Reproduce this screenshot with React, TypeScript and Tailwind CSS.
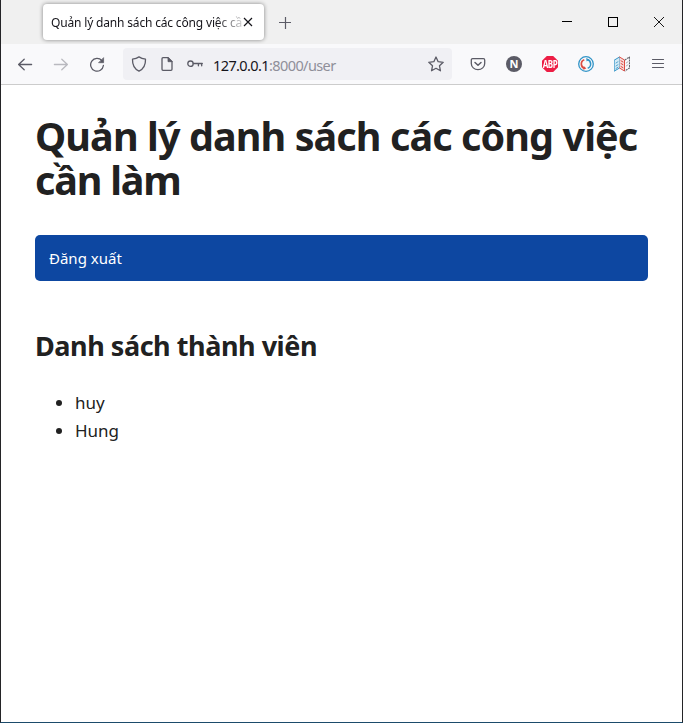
import type { ReactNode } from "react";

function Icon({ children, className = "" }: { children: ReactNode; className?: string }) {
  return (
    <svg
      viewBox="0 0 16 16"
      className={`h-4 w-4 shrink-0 ${className}`}
      fill="none"
      stroke="#5b5b66"
      strokeWidth="1.3"
      strokeLinecap="round"
      strokeLinejoin="round"
    >
      {children}
    </svg>
  );
}

function TitleBar() {
  return (
    <div className="flex h-11 shrink-0 items-start bg-[#f0f0f0]">
      <div className="mt-1 ml-[42px] flex h-9 w-[221px] shrink-0 items-center rounded bg-white pl-2 shadow-[0_0_4px_rgba(0,0,0,0.45)]">
        <div className="mt-0.5 w-[191px] overflow-hidden whitespace-nowrap text-[12px] leading-5 tracking-[-0.17px] text-[#15141a] [mask-image:linear-gradient(to_right,black_165px,transparent_197px)]">
          Quản lý danh sách các công việc cần làm
        </div>
        <svg viewBox="0 0 10 10" className="ml-px h-[10px] w-[10px] shrink-0" stroke="#15141a" strokeWidth="1.2">
          <path d="M1 1l8 8M9 1l-8 8" />
        </svg>
      </div>
      <svg viewBox="0 0 12 12" className="mt-[17px] ml-[15px] h-3 w-3 shrink-0" stroke="#5b5b66" strokeWidth="1.2">
        <path d="M6.5 0v12M0 5.5h12" />
      </svg>
      <div className="ml-auto flex h-11 items-center">
        <div className="flex w-[46px] justify-center">
          <svg viewBox="0 0 10 10" className="h-[10px] w-[10px]" stroke="#000" shapeRendering="crispEdges">
            <path d="M0 4.5h10" />
          </svg>
        </div>
        <div className="flex w-[46px] justify-center">
          <svg viewBox="0 0 10 10" className="h-[10px] w-[10px]" stroke="#000" fill="none" shapeRendering="crispEdges">
            <path d="M.5 .5h9v9h-9z" />
          </svg>
        </div>
        <div className="flex w-[46px] justify-center">
          <svg viewBox="0 0 10 10" className="h-[10px] w-[10px]" stroke="#000" strokeWidth="0.9">
            <path d="M0 0l10 10M10 0L0 10" />
          </svg>
        </div>
      </div>
    </div>
  );
}

function NavBar() {
  return (
    <div className="flex h-[41px] shrink-0 items-center border-b border-[#cccccc] bg-[#f9f9fb] pl-4">
      <Icon>
        <path d="M1.6 8.5h13M7.2 3.2L1.6 8.5l5.6 5.3" />
      </Icon>
      <Icon className="ml-5 opacity-40">
        <path d="M1.4 8.5h13M8.8 3.2l5.6 5.3-5.6 5.3" />
      </Icon>
      <Icon className="ml-5">
        <path d="M12.9 4.6A6.4 6.4 0 1 0 14.4 9.5" />
        <path d="M14.6 2v4.7H9.9z" fill="#5b5b66" strokeWidth="0.7" />
      </Icon>
      <div className="ml-[18px] flex h-8 w-[329px] items-center rounded bg-[#f0f0f4] px-2">
        <Icon>
          <path d="M8 .9c2 1.4 4 2 6.5 2.3.2 5.6-1.7 9.6-6.5 11.9C3.2 12.8 1.3 8.8 1.5 3.2 4 2.9 6 2.3 8 .9z" />
        </Icon>
        <Icon className="ml-3">
          <path d="M4 1.7h5l4 4v7.6a1 1 0 0 1-1 1H4a1 1 0 0 1-1-1V2.7a1 1 0 0 1 1-1z" />
          <path d="M9 1.7v4h4z" fill="#5b5b66" strokeWidth="0.8" />
        </Icon>
        <Icon className="ml-3">
          <circle cx="3.5" cy="7.7" r="2.7" />
          <path d="M6.3 7.5h9M11.4 7.5v2.3M14.7 7.5v2.3" />
        </Icon>
        <div className="mt-0.5 ml-[10px] text-[14.5px] leading-6 tracking-[-0.6px] whitespace-nowrap text-[#8f8f99]">
          <span className="text-[#15141a]">127.0.0.1</span>:8000/user
        </div>
        <Icon className="ml-auto">
          <path d="M8 1l2.15 4.7 5.05.6-3.7 3.5.95 5L8 12.3l-4.45 2.5.95-5L.8 6.3l5.05-.6z" />
        </Icon>
      </div>
      <div className="ml-[18px] flex items-center gap-5">
        <Icon>
          <path d="M2.6 2.7h10.8a1.3 1.3 0 0 1 1.3 1.3v3.4a6.7 6.3 0 0 1-13.400 0V4a1.3 1.3 0 0 1 1.3-1.3z" />
          <path d="M5 6.5l3 2.8 3-2.8" strokeWidth="1.5" />
        </Icon>
        <div className="flex h-4 w-4 items-center justify-center rounded-full bg-[#5b5b66] text-[11px] leading-4 font-bold text-white">
          N
        </div>
        <div className="flex h-4 w-4 items-center justify-center bg-[#ed1e45] text-[8px] leading-4 font-bold tracking-[-0.4px] text-white [clip-path:polygon(30%_0,70%_0,100%_30%,100%_70%,70%_100%,30%_100%,0_70%,0_30%)]">
          <span className="scale-y-125">ABP</span>
        </div>
        <Icon>
          <circle cx="8" cy="8" r="7.3" stroke="#3294c7" strokeWidth="1.3" />
          <path d="M6.300 3.700a4.600 4.600 0 0 0 .7 8.800" stroke="#dc4c43" strokeWidth="1.7" strokeLinecap="butt" />
          <path d="M9 3.500a4.600 4.600 0 0 1 .7 8.800" stroke="#3294c7" strokeWidth="1.5" strokeLinecap="butt" />
          <path d="M8.200 2l3 1.500-2.600 2z" fill="#3294c7" stroke="none" />
          <path d="M6 10.200l2.300 2.400-3.200 1.200z" fill="#dc4c43" stroke="none" />
        </Icon>
        <Icon>
          <path d="M.5 4L5.500 1v11L.5 15z" stroke="#3294c7" strokeWidth="1" fill="#d5eaf5" />
          <path d="M2 7l2-1.300M2 10l2-1.300M2 12.500l2-1.300" stroke="#3294c7" strokeWidth=".8" />
          <path d="M5.500 1l5 3v11l-5-3" stroke="#dc4c43" strokeWidth="1" fill="#f8dcda" />
          <path d="M7 4.800l2 1.200M7 7.500l2 1.200M7 10.500l2 1.200" stroke="#dc4c43" strokeWidth="1" />
          <path d="M10.800 4l4.700-3v11l-4.700 3" stroke="#66666c" strokeWidth="1.1" strokeLinecap="butt" strokeDasharray="2 .7" />
          <path d="M12.200 7l1.800-1.300M12.200 10l1.800-1.300" stroke="#99999e" strokeWidth=".8" />
        </Icon>
        <Icon>
          <path d="M2.5 3.5h11M2.5 7.5h11M2.5 11.5h11" strokeWidth="1.2" />
        </Icon>
      </div>
    </div>
  );
}

const members = ["huy", "Hung"];

export default function App() {
  return (
    <div className="flex h-[723px] w-[683px] flex-col overflow-hidden border-x border-b border-x-[#242427] border-b-[#1b4b6b] bg-white font-['Noto_Sans','Open_Sans',sans-serif]">
      <TitleBar />
      <NavBar />
      <main className="px-[34px] pt-[29px] text-[#212121]">
        <h1 className="text-[39.5px] leading-[44px] font-bold tracking-[-0.9px]">
          <span className="block whitespace-nowrap">Quản lý danh sách các công việc</span>
          <span className="block tracking-[-1.2px]">cần làm</span>
        </h1>
        <nav className="mt-[33px] flex h-[46px] items-center rounded-[5px] bg-[#0d47a1] px-[14px] text-[15px] text-white">
          Đăng xuất
        </nav>
        <h2 className="mt-[48px] text-[27px] leading-[34px] font-bold tracking-[-0.45px]">Danh sách thành viên</h2>
        <ul className="mt-[26px] list-disc pl-10 text-[17px] leading-7">
          {members.map((name) => (
            <li key={name}>{name}</li>
          ))}
        </ul>
      </main>
    </div>
  );
}
